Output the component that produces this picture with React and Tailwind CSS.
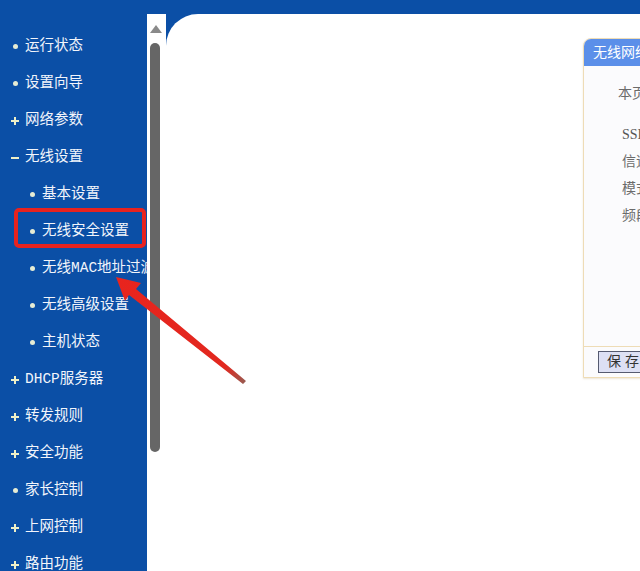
import React from 'react';

const menu = [
  { label: '运行状态', mark: 'dot' },
  { label: '设置向导', mark: 'dot' },
  { label: '网络参数', mark: 'plus' },
  { label: '无线设置', mark: 'minus' },
  { label: '基本设置', mark: 'dot', sub: true },
  { label: '无线安全设置', mark: 'dot', sub: true },
  { label: '无线MAC地址过滤', mark: 'dot', sub: true },
  { label: '无线高级设置', mark: 'dot', sub: true },
  { label: '主机状态', mark: 'dot', sub: true },
  { label: 'DHCP服务器', mark: 'plus' },
  { label: '转发规则', mark: 'plus' },
  { label: '安全功能', mark: 'plus' },
  { label: '家长控制', mark: 'dot' },
  { label: '上网控制', mark: 'plus' },
  { label: '路由功能', mark: 'plus' },
];

const serifStack = '"Liberation Serif", "Noto Sans CJK SC", serif';
const menuStack = '"Liberation Mono", "Noto Sans CJK SC", monospace';

function Mark({ type }) {
  if (type === 'plus') {
    return (
      <span className="relative w-[8px] h-[8px] shrink-0">
        <span className="absolute left-0 top-[3px] w-[8px] h-[2px] bg-[#eef0c8]" />
        <span className="absolute left-[3px] top-0 w-[2px] h-[8px] bg-[#eef0c8]" />
      </span>
    );
  }
  if (type === 'minus') {
    return <span className="w-[8px] h-[2px] shrink-0 bg-[#eef0c8]" />;
  }
  return <span className="w-[5px] h-[5px] mx-[1.5px] shrink-0 rounded-full bg-[#e6ecd4]" />;
}

function Arrow() {
  // red annotation arrow, thin tail at bottom-right, head pointing up-left
  return (
    <svg className="absolute left-0 top-0 pointer-events-none" width="640" height="571">
      <defs>
        <linearGradient id="tail" x1="116" y1="278" x2="245" y2="382" gradientUnits="userSpaceOnUse">
          <stop offset="0" stopColor="#e8241e" />
          <stop offset="0.85" stopColor="#e2281f" />
          <stop offset="1" stopColor="#9a5a50" />
        </linearGradient>
      </defs>
      <polygon
        points="116,277 141,283 136,289 246,381 243,384 129,295 125,301"
        fill="url(#tail)"
      />
    </svg>
  );
}

export default function App() {
  return (
    <div
      className="relative w-[640px] h-[571px] overflow-hidden flex bg-[#0b4fa6]"
      style={{ fontFamily: serifStack }}
    >
      {/* Left menu */}
      <nav className="w-[147px] shrink-0 overflow-hidden pt-[28px]" style={{ fontFamily: menuStack }}>
        {menu.map((m) => (
          <div
            key={m.label}
            className={`h-[37px] flex items-center gap-[6px] whitespace-nowrap ${m.sub ? 'pl-[28px]' : 'pl-[11px]'}`}
          >
            <Mark type={m.mark} />
            <span className="text-[14.5px] text-[#f2f5fb] leading-none">{m.label}</span>
          </div>
        ))}
      </nav>

      {/* Main frame */}
      <div className="flex-1 flex pt-[14px] min-w-0">
        {/* scrollbar */}
        <div className="w-[19px] shrink-0 bg-white flex flex-col items-center pt-[11px]">
          <span className="w-0 h-0 border-l-[6px] border-r-[6px] border-b-[8px] border-l-transparent border-r-transparent border-b-[#8a8a8a] ml-[-2px]" />
          <span className="mt-[10px] w-[10px] h-[409px] rounded-full bg-[#666666] ml-[-3px]" />
        </div>

        {/* content */}
        <div className="flex-1 min-w-0 bg-white rounded-tl-[32px] pt-[24px] pl-[417px] overflow-hidden">
          <div className="w-[420px] h-[340px] border border-[#eedcb6] rounded-tl-[8px] bg-[#fbfbfd] shadow-[0_1px_2px_rgba(200,180,140,0.35)] flex flex-col">
            <div className="h-[27px] bg-[#5b8fe9] rounded-tl-[7px] flex items-center pl-[9px] text-[14px] text-white whitespace-nowrap">
              无线网络基本设置
            </div>
            <div className="flex-1 text-[14px] text-[#6b6b6b] whitespace-nowrap">
              <p className="pl-[34px] pt-[17px]">本页面设置路由器无线网络的基本参数。</p>
              <div className="pl-[38px] pt-[20px] flex flex-col gap-[5px]">
                <p className="h-[22px] text-[#555]">SSID号：</p>
                <p className="h-[22px]">信道：</p>
                <p className="h-[22px]">模式：</p>
                <p className="h-[22px]">频段带宽：</p>
              </div>
            </div>
            <div className="h-[31px] border-t border-[#eedcb6] flex items-center pl-[14px]">
              <button className="h-[22px] px-[8px] bg-[#dde0f4] border border-[#555a70] text-[14px] text-[#333] tracking-[4px] leading-none">
                保存
              </button>
            </div>
          </div>
        </div>
      </div>

      {/* annotation box around the selected item */}
      <div className="absolute left-[14px] top-[208px] w-[132px] h-[40px] border-[4px] border-[#e8231f] rounded-[5px]" />
      <Arrow />
    </div>
  );
}
